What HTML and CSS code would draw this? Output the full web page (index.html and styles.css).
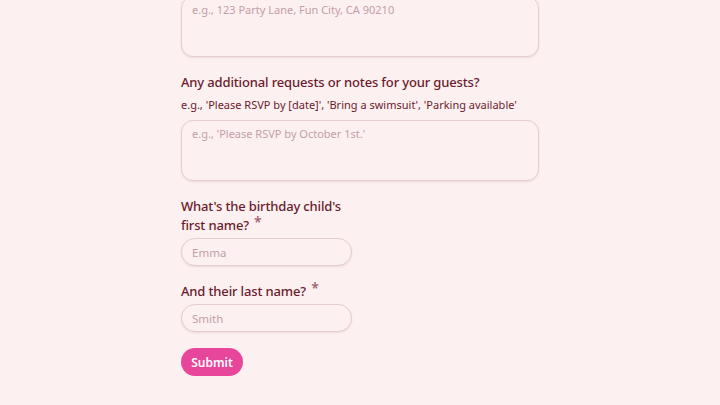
FILE: index.html
```html
<!DOCTYPE html>
<html lang="en">

<head>
    <meta charset="UTF-8">
    <meta name="viewport" content="width=device-width, initial-scale=1.0">
    <title>Party Invitation Details</title>
    <link rel="stylesheet" href="styles.css">
</head>

<body>
    <form class="invite-form">
        <div class="field">
            <textarea class="text-area" placeholder="e.g., 123 Party Lane, Fun City, CA 90210"></textarea>
        </div>

        <div class="field">
            <label class="field-label">Any additional requests or notes for your guests?</label>
            <p class="field-hint">e.g., 'Please RSVP by [date]', 'Bring a swimsuit', 'Parking available'</p>
            <textarea class="text-area" placeholder="e.g., 'Please RSVP by October 1st.'"></textarea>
        </div>

        <div class="field half">
            <label class="field-label">What's the birthday child's first name? <span class="required">*</span></label>
            <input class="text-input" type="text" placeholder="Emma">
        </div>

        <div class="field half">
            <label class="field-label">And their last name? <span class="required">*</span></label>
            <input class="text-input" type="text" placeholder="Smith">
        </div>

        <button type="button" class="submit-button">Submit</button>
    </form>
</body>

</html>
```

FILE: styles.css
```css
:root {
    --bg: #fdf0f1;
    --text: #6b1b2c;
    --placeholder: #c39ea7;
    --border: #e3cdd1;
    --accent: #e8469a;
}

* {
    margin: 0;
    padding: 0;
    box-sizing: border-box;
    font-family: 'Noto Sans', 'Open Sans', sans-serif;
}

body {
    background-color: var(--bg);
    color: var(--text);
}

.invite-form {
    width: 358px;
    margin: -4px auto 0;
    display: flex;
    flex-direction: column;
    gap: 16px;
}

.field {
    display: flex;
    flex-direction: column;
}

.field.half {
    width: 171px;
}

.field-label {
    font-size: 13px;
    font-weight: 500;
    line-height: 19px;
    letter-spacing: -0.15px;
    margin-bottom: 4px;
}

.field.half .field-label {
    margin-bottom: 3px;
    padding-right: 4px;
}

.required {
    color: #a35a6c;
    vertical-align: 3px;
    font-size: 14px;
    line-height: 0;
    margin-left: 2px;
}

.field-hint {
    font-size: 11px;
    line-height: 17px;
    margin-bottom: 7px;
}

.text-area,
.text-input {
    background-color: var(--bg);
    border: 1px solid var(--border);
    color: var(--text);
    font-size: 11px;
    box-shadow: 0 1px 2px rgba(120, 60, 70, 0.12);
    outline: none;
}

.text-area {
    height: 61px;
    border-radius: 12px;
    padding: 5px 10px;
    line-height: 15px;
    resize: none;
}

.text-input {
    height: 28px;
    border-radius: 14px;
    padding: 0 10px;
    font-size: 11.5px;
}

::placeholder {
    color: var(--placeholder);
}

.submit-button {
    align-self: flex-start;
    background-color: var(--accent);
    color: #fff;
    border: none;
    border-radius: 14px;
    height: 28px;
    width: 62px;
    font-size: 12px;
    font-weight: 600;
    cursor: pointer;
}
```
